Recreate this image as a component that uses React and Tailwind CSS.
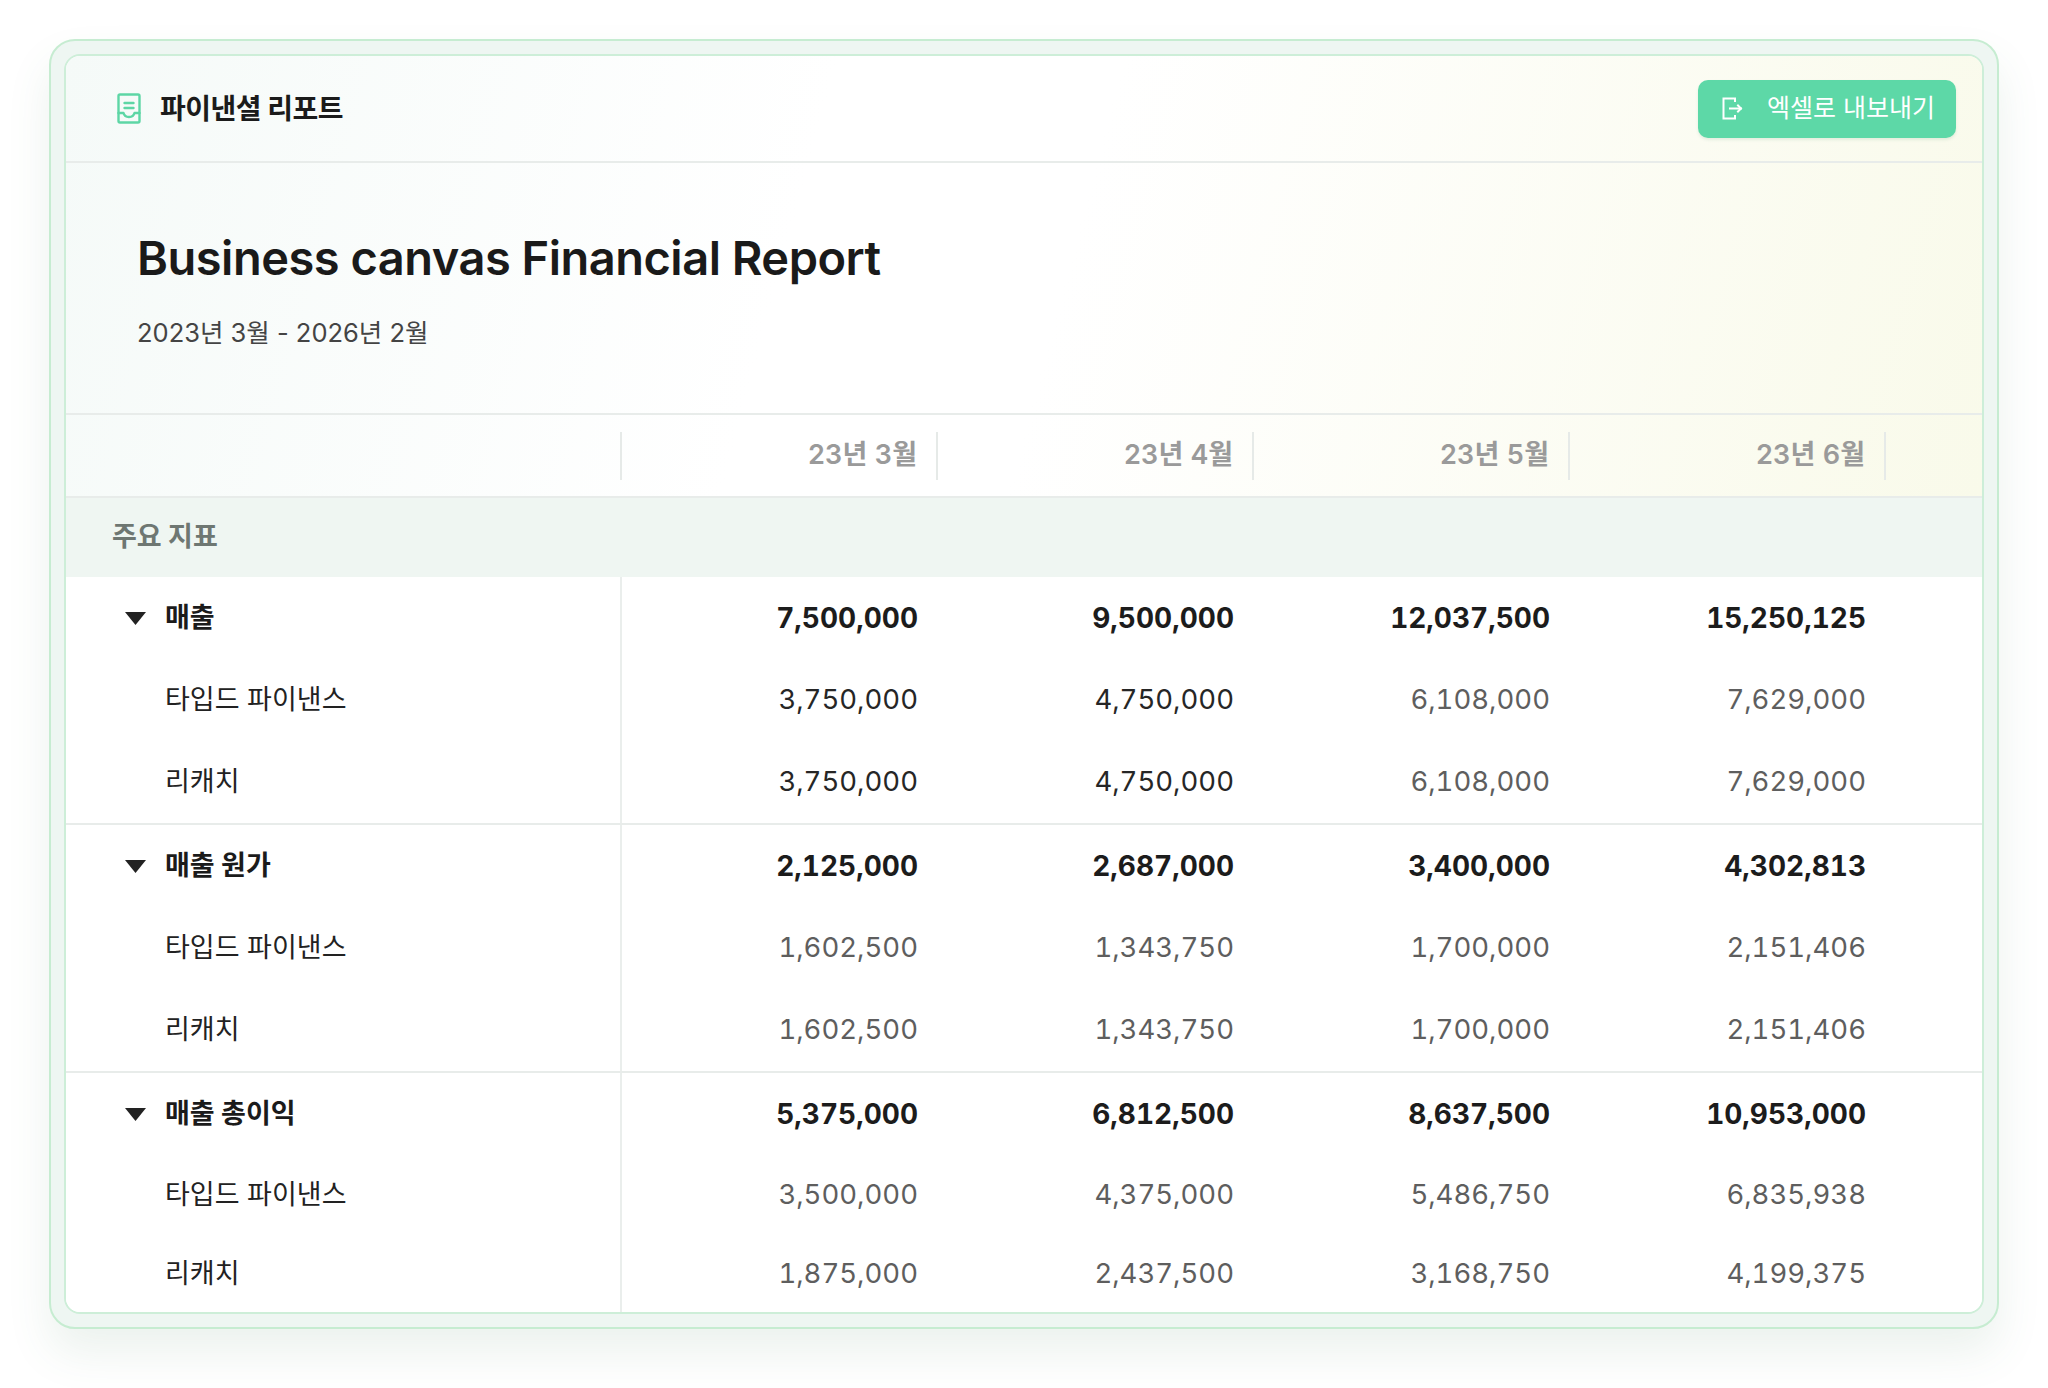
import React from 'react';

const months = ['23년 3월', '23년 4월', '23년 5월', '23년 6월'];

const groups = [
    {
        name: '매출',
        total: ['7,500,000', '9,500,000', '12,037,500', '15,250,125'],
        darkCols: 2,
        subs: [
            { name: '타입드 파이낸스', values: ['3,750,000', '4,750,000', '6,108,000', '7,629,000'] },
            { name: '리캐치', values: ['3,750,000', '4,750,000', '6,108,000', '7,629,000'] },
        ],
    },
    {
        name: '매출 원가',
        total: ['2,125,000', '2,687,000', '3,400,000', '4,302,813'],
        darkCols: 0,
        subs: [
            { name: '타입드 파이낸스', values: ['1,602,500', '1,343,750', '1,700,000', '2,151,406'] },
            { name: '리캐치', values: ['1,602,500', '1,343,750', '1,700,000', '2,151,406'] },
        ],
    },
    {
        name: '매출 총이익',
        total: ['5,375,000', '6,812,500', '8,637,500', '10,953,000'],
        darkCols: 0,
        subs: [
            { name: '타입드 파이낸스', values: ['3,500,000', '4,375,000', '5,486,750', '6,835,938'] },
            { name: '리캐치', values: ['1,875,000', '2,437,500', '3,168,750', '4,199,375'] },
        ],
    },
];

function ReportIcon() {
    return (
        <svg width="24" height="31" viewBox="0 0 24 31" fill="none" stroke="#5dd6a5" strokeWidth="2.4" strokeLinecap="round" strokeLinejoin="round">
            <rect x="1.5" y="1.5" width="21" height="28" rx="1.5" />
            <path d="M7.5 10 H16.5" />
            <path d="M7.5 15 H16.5" />
            <path d="M1.5 20 H6.5 Q7.5 24 12 24 Q16.5 24 17.5 20 H22.5" />
        </svg>
    );
}

function ExportIcon() {
    return (
        <svg width="22" height="23" viewBox="0 0 22 23" fill="none" stroke="#ffffff" strokeWidth="2" strokeLinecap="square">
            <path d="M13 4 V1.5 H1.5 V21.5 H13 V19" />
            <path d="M8 11.5 H19" />
            <path d="M16 8.5 L19 11.5 L16 14.5" />
        </svg>
    );
}

function Caret() {
    return (
        <svg width="21" height="13" viewBox="0 0 21 13">
            <polygon points="0,0 21,0 10.5,13" fill="#222222" />
        </svg>
    );
}

export default function App() {
    return (
        <div className="w-full h-[1388px] bg-white pt-[39px] pl-[49px] font-['Inter','Noto_Sans_CJK_KR',sans-serif] overflow-hidden">
            <div className="w-[1950px] h-[1290px] rounded-[26px] border-2 border-[#c6ecd1] bg-[#eef6f2] p-[13px] shadow-[0_24px_44px_rgba(70,130,90,0.10)]">
                <div className="h-full rounded-[16px] border-2 border-[#cdeed8] overflow-hidden bg-white flex flex-col">

                    {/* top area with soft gradient */}
                    <div className="bg-[linear-gradient(105deg,#f5faf8_0%,#ffffff_38%,#ffffff_52%,#f9faea_100%)]">
                        <div className="h-[107px] border-b-2 border-[#e8ecea] flex items-center justify-between pl-[51px] pr-[26px]">
                            <div className="flex items-center gap-[19px]">
                                <ReportIcon />
                                <span className="text-[28px] font-bold text-[#1b1b1b] tracking-[-0.5px]">파이낸셜 리포트</span>
                            </div>
                            <button className="h-[58px] w-[258px] rounded-[10px] bg-[#5dd8a7] flex items-center pl-[24px] gap-[23px] shadow-[0_2px_3px_rgba(60,140,100,0.12)]">
                                <ExportIcon />
                                <span className="text-[25px] text-white">엑셀로 내보내기</span>
                            </button>
                        </div>

                        <div className="h-[250px] pl-[71px] pt-[66px] flex flex-col">
                            <h1 className="text-[47px] leading-[58px] font-semibold text-[#1a1a1a] tracking-[-0.5px]">Business canvas Financial Report</h1>
                            <p className="mt-[30px] text-[25.5px] leading-[31px] text-[#444444]">2023년 3월 - 2026년 2월</p>
                        </div>

                        <div className="h-[85px] border-y-2 border-[#e8ecea] flex">
                            <div className="w-[556px] shrink-0 flex items-center justify-end">
                                <div className="w-[2px] h-[48px] bg-[#e6eae8]" />
                            </div>
                            {months.map((m) => (
                                <div key={m} className="w-[316px] shrink-0 flex items-center justify-end">
                                    <span className="text-[27px] font-semibold text-[#9a9a9a] mr-[19px] tabular-nums">{m}</span>
                                    <div className="w-[2px] h-[48px] bg-[#e6eae8]" />
                                </div>
                            ))}
                        </div>
                    </div>

                    <div className="h-[79px] shrink-0 bg-[#eff6f2] flex items-center pl-[46px]">
                        <span className="text-[27px] font-bold text-[#6e7772]">주요 지표</span>
                    </div>

                    <div className="flex-1 bg-white">
                        {groups.map((g, gi) => {
                            const last = gi === groups.length - 1;
                            return (
                                <div key={g.name} className={last ? '' : 'border-b-2 border-[#e8ecea]'}>
                                    <div className="h-[82px] flex">
                                        <div className="w-[556px] shrink-0 border-r-2 border-[#eaeeec] flex items-center pl-[59px] gap-[19px]">
                                            <Caret />
                                            <span className="text-[27px] font-bold text-[#1b1b1b]">{g.name}</span>
                                        </div>
                                        {g.total.map((v, i) => (
                                            <div key={i} className="w-[316px] shrink-0 flex items-center justify-end pr-[20px] text-[28px] font-bold text-[#1c1c1c] tabular-nums">
                                                {v}
                                            </div>
                                        ))}
                                    </div>
                                    {g.subs.map((s, si) => (
                                        <div key={s.name} className={`flex ${last ? (si === 0 ? 'h-[80px]' : 'h-[78px]') : 'h-[82px]'}`}>
                                            <div className="w-[556px] shrink-0 border-r-2 border-[#eaeeec] flex items-center pl-[99px]">
                                                <span className="text-[27px] text-[#222222]">{s.name}</span>
                                            </div>
                                            {s.values.map((v, i) => (
                                                <div key={i} className={`w-[316px] shrink-0 flex items-center justify-end pr-[20px] text-[27.5px] tabular-nums ${i < g.darkCols ? 'text-[#262626]' : 'text-[#5e5e5e]'}`}>
                                                    {v}
                                                </div>
                                            ))}
                                        </div>
                                    ))}
                                </div>
                            );
                        })}
                    </div>
                </div>
            </div>
        </div>
    );
}
